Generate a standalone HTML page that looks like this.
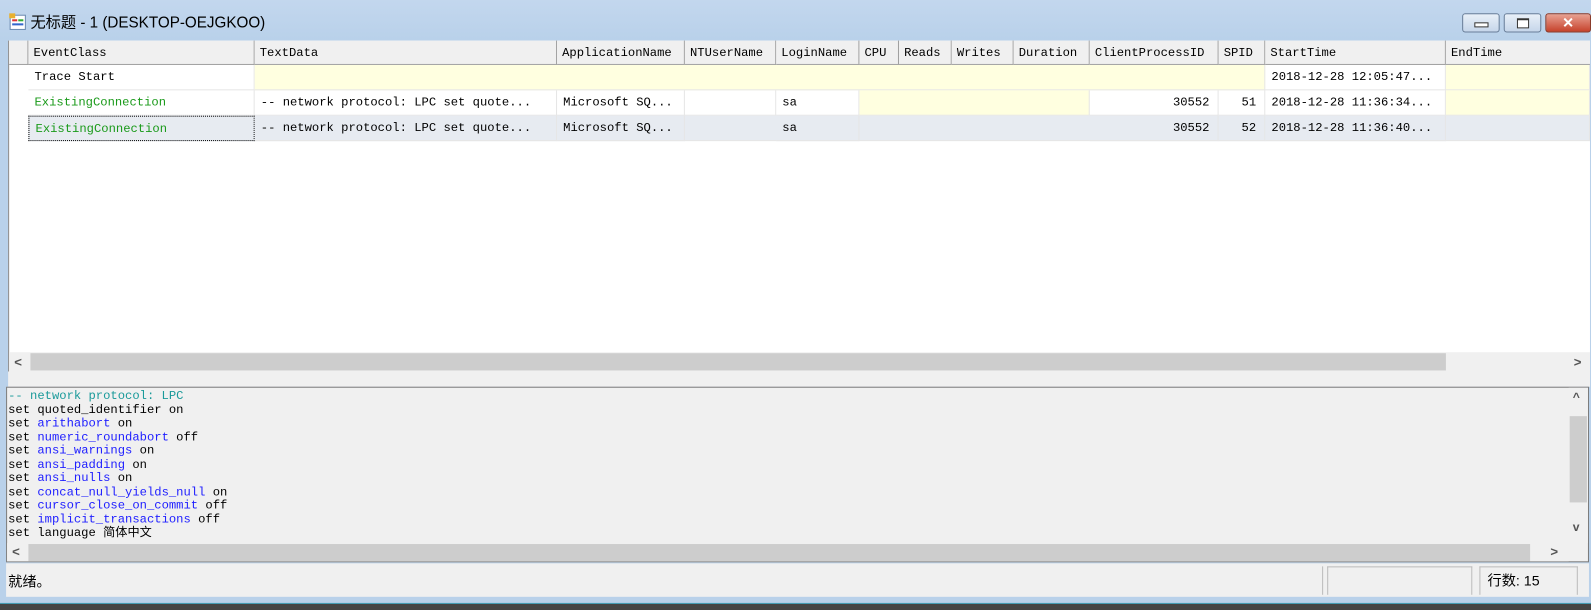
<!DOCTYPE html>
<html><head><meta charset="utf-8"><style>
body{margin:0;width:1591px;height:609px;background:#b9d1ea;position:relative;overflow:hidden;font-family:"Liberation Mono","Noto Sans CJK SC",monospace;}
#w{position:absolute;left:0;top:0;width:1568px;height:600px;transform:scale(1.01467,1.015);transform-origin:0 0;}
.abs{position:absolute;}
.title{left:30px;top:11px;font:15px "Liberation Sans","Noto Sans CJK SC",sans-serif;color:#000;}
.grid{left:8px;top:40px;width:1558px;height:326px;background:#fff;border-left:1px solid #888;}
.hdr{top:0;height:24px;background:#f0f0f0;border-right:1px solid #a0a0a0;border-bottom:1px solid #a0a0a0;box-sizing:border-box;font-size:12px;line-height:24px;padding-left:5px;white-space:nowrap;overflow:hidden;}
.c{height:25px;box-sizing:border-box;border-right:1px solid #e6e6e6;border-bottom:1px solid #e6e6e6;font-size:12px;line-height:25px;padding-left:6px;white-space:nowrap;overflow:hidden;}
.y{background:#ffffe0}.s{background:#e7ebf1}.g{color:#1a9a1a}.r{text-align:right;padding-right:8px;padding-left:0}
.code{left:8px;top:384px;font-size:12px;line-height:13.55px;white-space:pre;color:#000;}
.b{color:#2020ff}.t{color:#1a9a9a}
</style></head><body><div id="w">
<div class="abs" style="left:0;top:0;width:1568px;height:38px;background:linear-gradient(#c3d7ee,#b9d1ea)"></div>
<svg class="abs" style="left:9px;top:13px" width="18" height="18"><rect x="1" y="2" width="15" height="14" fill="#fff" stroke="#6a8ab0"/><rect x="3" y="6" width="5" height="2" fill="#d33"/><rect x="9" y="6" width="5" height="2" fill="#3a3"/><rect x="3" y="10" width="11" height="2" fill="#36c"/><rect x="0" y="0" width="6" height="5" fill="#e8b030"/></svg>
<div class="abs title">无标题 - 1 (DESKTOP-OEJGKOO)</div>
<div class="abs" style="left:1441px;top:13px;width:37px;height:19px;border:1px solid #6a7f99;border-radius:3px;background:linear-gradient(#e9f0f8,#c6d6ea);box-sizing:border-box"><div style="margin:8px auto 0;width:12px;height:3px;border:1px solid #333;background:#fff"></div></div>
<div class="abs" style="left:1482px;top:13px;width:37px;height:19px;border:1px solid #6a7f99;border-radius:3px;background:linear-gradient(#e9f0f8,#c6d6ea);box-sizing:border-box"><div style="margin:4px auto 0;width:10px;height:7px;border:1px solid #333;border-top-width:2px;background:#fff"></div></div>
<div class="abs" style="left:1523px;top:13px;width:45px;height:19px;border:1px solid #8a3b2b;border-radius:3px;background:linear-gradient(#e8a293,#c6432c);box-sizing:border-box;color:#fff;text-align:center;font:bold 14px/17px 'Liberation Sans',sans-serif">✕</div>

<div class="abs grid">
<div class="abs hdr" style="left:0;width:19px;padding:0"></div>
<div class="abs hdr" style="left:19px;width:223px">EventClass</div>
<div class="abs hdr" style="left:242px;width:298px">TextData</div>
<div class="abs hdr" style="left:540px;width:126px">ApplicationName</div>
<div class="abs hdr" style="left:666px;width:90px">NTUserName</div>
<div class="abs hdr" style="left:756px;width:82px">LoginName</div>
<div class="abs hdr" style="left:838px;width:39px">CPU</div>
<div class="abs hdr" style="left:877px;width:52px">Reads</div>
<div class="abs hdr" style="left:929px;width:61px">Writes</div>
<div class="abs hdr" style="left:990px;width:75px">Duration</div>
<div class="abs hdr" style="left:1065px;width:127px">ClientProcessID</div>
<div class="abs hdr" style="left:1192px;width:46px">SPID</div>
<div class="abs hdr" style="left:1238px;width:178px">StartTime</div>
<div class="abs hdr" style="left:1416px;width:142px;border-right:none">EndTime</div>

<div class="abs" style="left:0;top:24px">
<div class="abs c" style="left:19px;width:223px">Trace Start</div>
<div class="abs c y" style="left:242px;width:996px"></div>
<div class="abs c" style="left:1238px;width:178px">2018-12-28 12:05:47...</div>
<div class="abs c y" style="left:1416px;width:142px"></div>
</div>
<div class="abs" style="left:0;top:49px">
<div class="abs c g" style="left:19px;width:223px">ExistingConnection</div>
<div class="abs c" style="left:242px;width:298px">-- network protocol: LPC  set quote...</div>
<div class="abs c" style="left:540px;width:126px">Microsoft SQ...</div>
<div class="abs c" style="left:666px;width:90px"></div>
<div class="abs c" style="left:756px;width:82px">sa</div>
<div class="abs c y" style="left:838px;width:227px"></div>
<div class="abs c r" style="left:1065px;width:127px">30552</div>
<div class="abs c r" style="left:1192px;width:46px">51</div>
<div class="abs c" style="left:1238px;width:178px">2018-12-28 11:36:34...</div>
<div class="abs c y" style="left:1416px;width:142px"></div>
</div>
<div class="abs" style="left:0;top:74px">
<div class="abs c s" style="left:19px;width:1539px"></div>
<div class="abs c s g" style="left:19px;width:223px;border:1px dotted #000">ExistingConnection</div>
<div class="abs c s" style="left:242px;width:298px">-- network protocol: LPC  set quote...</div>
<div class="abs c s" style="left:540px;width:126px">Microsoft SQ...</div>
<div class="abs c s" style="left:756px;width:82px">sa</div>
<div class="abs c s r" style="left:1065px;width:127px">30552</div>
<div class="abs c s r" style="left:1192px;width:46px">52</div>
<div class="abs c s" style="left:1238px;width:178px">2018-12-28 11:36:40...</div>
</div>
<div class="abs" style="left:0;top:307px;width:1558px;height:19px;background:#f0f0f0"><div class="abs" style="left:21px;top:1px;width:1395px;height:17px;background:#cdcdcd"></div><div class="abs" style="left:5px;top:0;font:bold 13px/19px 'Liberation Sans';color:#555">&lt;</div><div class="abs" style="left:1542px;top:0;font:bold 13px/19px 'Liberation Sans';color:#555">&gt;</div></div>
</div>
<div class="abs" style="left:8px;top:366px;width:1559px;height:15px;background:#f0f0f0"></div>
<div class="abs" style="left:6px;top:381px;width:1560px;height:173px;background:#f0f0f0;border:1px solid #7a7a7a;box-sizing:border-box"></div>
<div class="abs code"><span class="t">-- network protocol: LPC</span>
set quoted_identifier on
set <span class="b">arithabort</span> on
set <span class="b">numeric_roundabort</span> off
set <span class="b">ansi_warnings</span> on
set <span class="b">ansi_padding</span> on
set <span class="b">ansi_nulls</span> on
set <span class="b">concat_null_yields_null</span> on
set <span class="b">cursor_close_on_commit</span> off
set <span class="b">implicit_transactions</span> off
set language 简体中文</div>
<div class="abs" style="left:1546px;top:382px;width:19px;height:153px;background:#f0f0f0"><div class="abs" style="left:1px;top:28px;width:17px;height:85px;background:#cdcdcd"></div><div class="abs" style="left:4px;top:2px;font:bold 12px 'Liberation Sans';color:#555">^</div><div class="abs" style="left:4px;top:130px;font:bold 12px 'Liberation Sans';color:#555">v</div></div>
<div class="abs" style="left:7px;top:535px;width:1539px;height:18px;background:#f0f0f0"><div class="abs" style="left:21px;top:1px;width:1480px;height:17px;background:#cdcdcd"></div><div class="abs" style="left:5px;top:0;font:bold 13px/18px 'Liberation Sans';color:#555">&lt;</div><div class="abs" style="left:1521px;top:0;font:bold 13px/18px 'Liberation Sans';color:#555">&gt;</div></div>
<div class="abs" style="left:6px;top:555px;width:1560px;height:33px;background:#f0f0f0"></div>
<div class="abs" style="left:8px;top:563px;font:14px 'Noto Sans CJK SC',sans-serif">就绪。</div>
<div class="abs" style="left:1303px;top:558px;width:3px;height:28px;border-left:1px solid #bbb"></div>
<div class="abs" style="left:1308px;top:558px;width:143px;height:28px;border:1px solid #bbb;border-bottom:none;box-sizing:border-box"></div>
<div class="abs" style="left:1458px;top:558px;width:97px;height:28px;border:1px solid #bbb;border-bottom:none;box-sizing:border-box;font:14px/26px 'Liberation Sans','Noto Sans CJK SC',sans-serif;padding-left:7px">行数: 15</div>
<div class="abs" style="left:0;top:594px;width:1568px;height:1px;background:#3d9fb8"></div>
<div class="abs" style="left:0;top:595px;width:1568px;height:6px;background:#444"></div>
</div></body></html>
